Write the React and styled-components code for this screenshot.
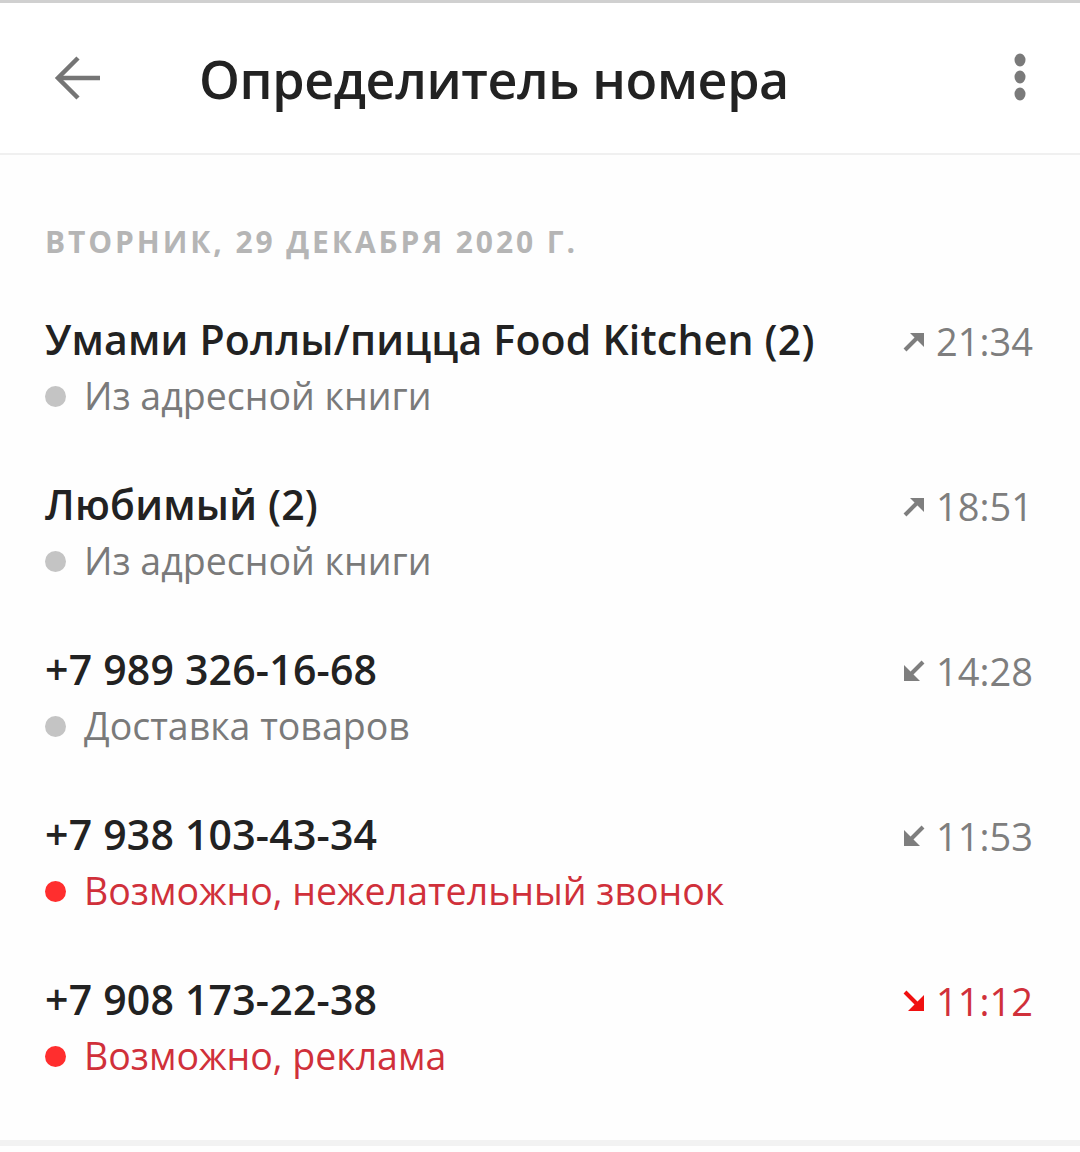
import React from "react";
import styled, { createGlobalStyle } from "styled-components";

const GlobalStyle = createGlobalStyle`
  html, body {
    margin: 0;
    padding: 0;
    background: #fff;
  }
  body {
    font-family: "Open Sans", "Noto Sans", sans-serif;
  }
`;

const Screen = styled.div`
  width: 1080px;
  height: 1152px;
  background: #fefefe;
  border-top: 3px solid #d0d0d0;
  box-sizing: border-box;
  display: flex;
  flex-direction: column;
`;

const Toolbar = styled.header`
  height: 152px;
  display: flex;
  align-items: center;
  padding: 0 32px 0 50px;
  border-bottom: 2px solid #f0f0f0;
  background: #fff;
  box-sizing: border-box;
`;

const IconButton = styled.div`
  width: 56px;
  height: 56px;
  display: flex;
  align-items: center;
  justify-content: center;
  color: #757575;
`;

const Title = styled.h1`
  flex: 1;
  margin: 0 0 0 93px;
  font-family: "Open Sans", sans-serif;
  font-weight: 600;
  font-size: 52px;
  letter-spacing: -0.4px;
  color: #222;
`;

const Content = styled.main`
  flex: 1;
  padding: 0 47px 0 45px;
`;

const DayLabel = styled.div`
  margin-top: 66px;
  height: 40px;
  font-size: 30px;
  font-weight: 700;
  letter-spacing: 2.9px;
  color: #b5b5b5;
  text-transform: uppercase;
`;

const List = styled.ul`
  list-style: none;
  margin: 51px 0 0;
  padding: 0;
`;

const Row = styled.li`
  height: 165px;
  display: flex;
  justify-content: space-between;
`;

const Info = styled.div`
  display: flex;
  flex-direction: column;
`;

const Name = styled.div`
  font-size: 41px;
  font-weight: 600;
  letter-spacing: 0.2px;
  line-height: 54px;
  color: #222;
`;

const Status = styled.div`
  display: flex;
  align-items: center;
  margin-top: 4px;
  font-size: 37.5px;
  line-height: 52px;
  color: ${(p) => (p.$warn ? "#d0303a" : "#7a7a7a")};

  &::before {
    content: "";
    width: 21px;
    height: 21px;
    border-radius: 50%;
    margin-right: 18px;
    background: ${(p) => (p.$warn ? "#ff2e2e" : "#c4c4c4")};
  }
`;

const Time = styled.div`
  display: flex;
  align-items: center;
  gap: 10px;
  height: 54px;
  margin-top: 2px;
  font-size: 38px;
  color: ${(p) => (p.$warn ? "#d0303a" : "#7e7e7e")};
`;

const BottomBar = styled.div`
  height: 6px;
  margin-bottom: 6px;
  background: #f2f2f2;
`;

const BackArrow = () => (
  <svg width="48" height="48" viewBox="0 0 48 48" fill="none">
    <path d="M46 24H6" stroke="#757575" strokeWidth="4.5" />
    <path d="M24 4L4 24l20 20" stroke="#757575" strokeWidth="4.5" />
  </svg>
);

const MoreIcon = () => (
  <svg width="20" height="50" viewBox="0 0 20 50" fill="#7a7a7a">
    <ellipse cx="10" cy="7" rx="5.5" ry="6.5" />
    <ellipse cx="10" cy="24" rx="5.5" ry="6.5" />
    <ellipse cx="10" cy="41" rx="5.5" ry="6.5" />
  </svg>
);

const CallArrow = ({ dir, color }) => {
  const d = {
    out: { line: "M3 21L18 6", head: "M8 4h14v14z" },
    in: { line: "M21 3L6 18", head: "M2 6v16h16z" },
    missed: { line: "M3 3l15 15", head: "M22 6v16H6z" },
  }[dir];
  return (
    <svg width="24" height="24" viewBox="0 0 24 24">
      <path d={d.line} stroke={color} strokeWidth="4" fill="none" />
      <path d={d.head} fill={color} />
    </svg>
  );
};

const calls = [
  { name: "Умами Роллы/пицца Food Kitchen (2)", status: "Из адресной книги", time: "21:34", dir: "out" },
  { name: "Любимый (2)", status: "Из адресной книги", time: "18:51", dir: "out" },
  { name: "+7 989 326-16-68", status: "Доставка товаров", time: "14:28", dir: "in" },
  { name: "+7 938 103-43-34", status: "Возможно, нежелательный звонок", time: "11:53", dir: "in", warn: true },
  { name: "+7 908 173-22-38", status: "Возможно, реклама", time: "11:12", dir: "missed", warn: true, missed: true },
];

const App = () => (
  <>
    <GlobalStyle />
    <Screen>
      <Toolbar>
        <IconButton>
          <BackArrow />
        </IconButton>
        <Title>Определитель номера</Title>
        <IconButton>
          <MoreIcon />
        </IconButton>
      </Toolbar>
      <Content>
        <DayLabel>Вторник, 29 декабря 2020 г.</DayLabel>
        <List>
          {calls.map((call, index) => (
            <Row key={index}>
              <Info>
                <Name>{call.name}</Name>
                <Status $warn={call.warn}>{call.status}</Status>
              </Info>
              <Time $warn={call.missed}>
                <CallArrow dir={call.dir} color={call.missed ? "#f01010" : "#7e7e7e"} />
                {call.time}
              </Time>
            </Row>
          ))}
        </List>
      </Content>
      <BottomBar />
    </Screen>
  </>
);

export default App;
